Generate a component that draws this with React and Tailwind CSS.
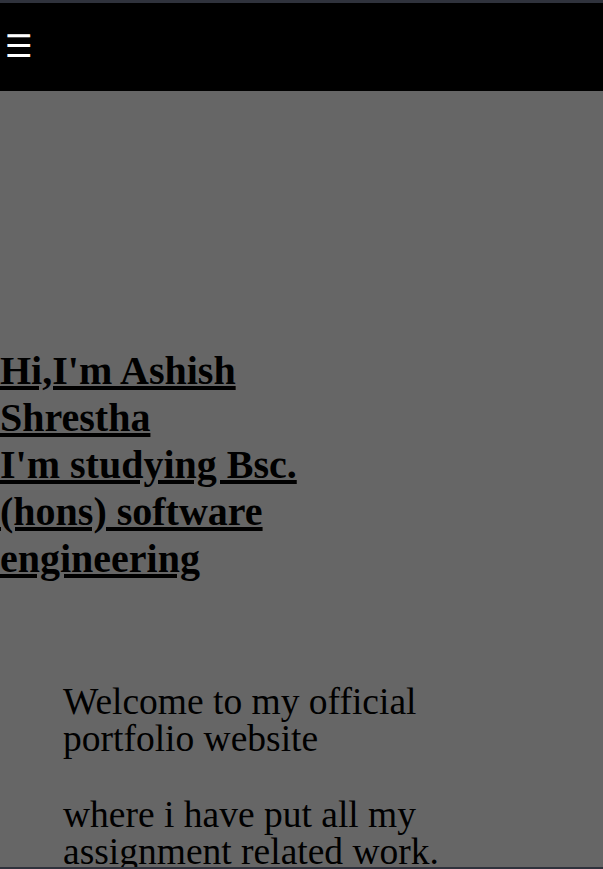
export default function App() {
  return (
    <div className="h-[869px] w-[603px] overflow-hidden bg-[#666666] border-t-[3px] border-b-2 border-[#2f323c] flex flex-col" style={{ fontFamily: '"Liberation Serif", "Times New Roman", serif' }}>
      <header className="h-[88px] bg-black shrink-0 flex items-start">
        <span className="text-white text-[31px] leading-none pl-[5px] pt-[28px]" style={{ fontFamily: '"DejaVu Sans", sans-serif' }}>☰</span>
      </header>
      <h1 className="mt-[256px] w-[301px] text-[40px] leading-[47px] font-bold text-black underline">
        Hi,I'm Ashish Shrestha<br />I'm studying Bsc. (hons) software engineering
      </h1>
      <div className="mt-[101px] pl-[63px] w-[483px] text-[37.5px] leading-[37px] text-black">
        <p>Welcome to my official portfolio website</p>
        <p className="mt-[39px]">where i have put all my assignment related work.</p>
      </div>
    </div>
  );
}
